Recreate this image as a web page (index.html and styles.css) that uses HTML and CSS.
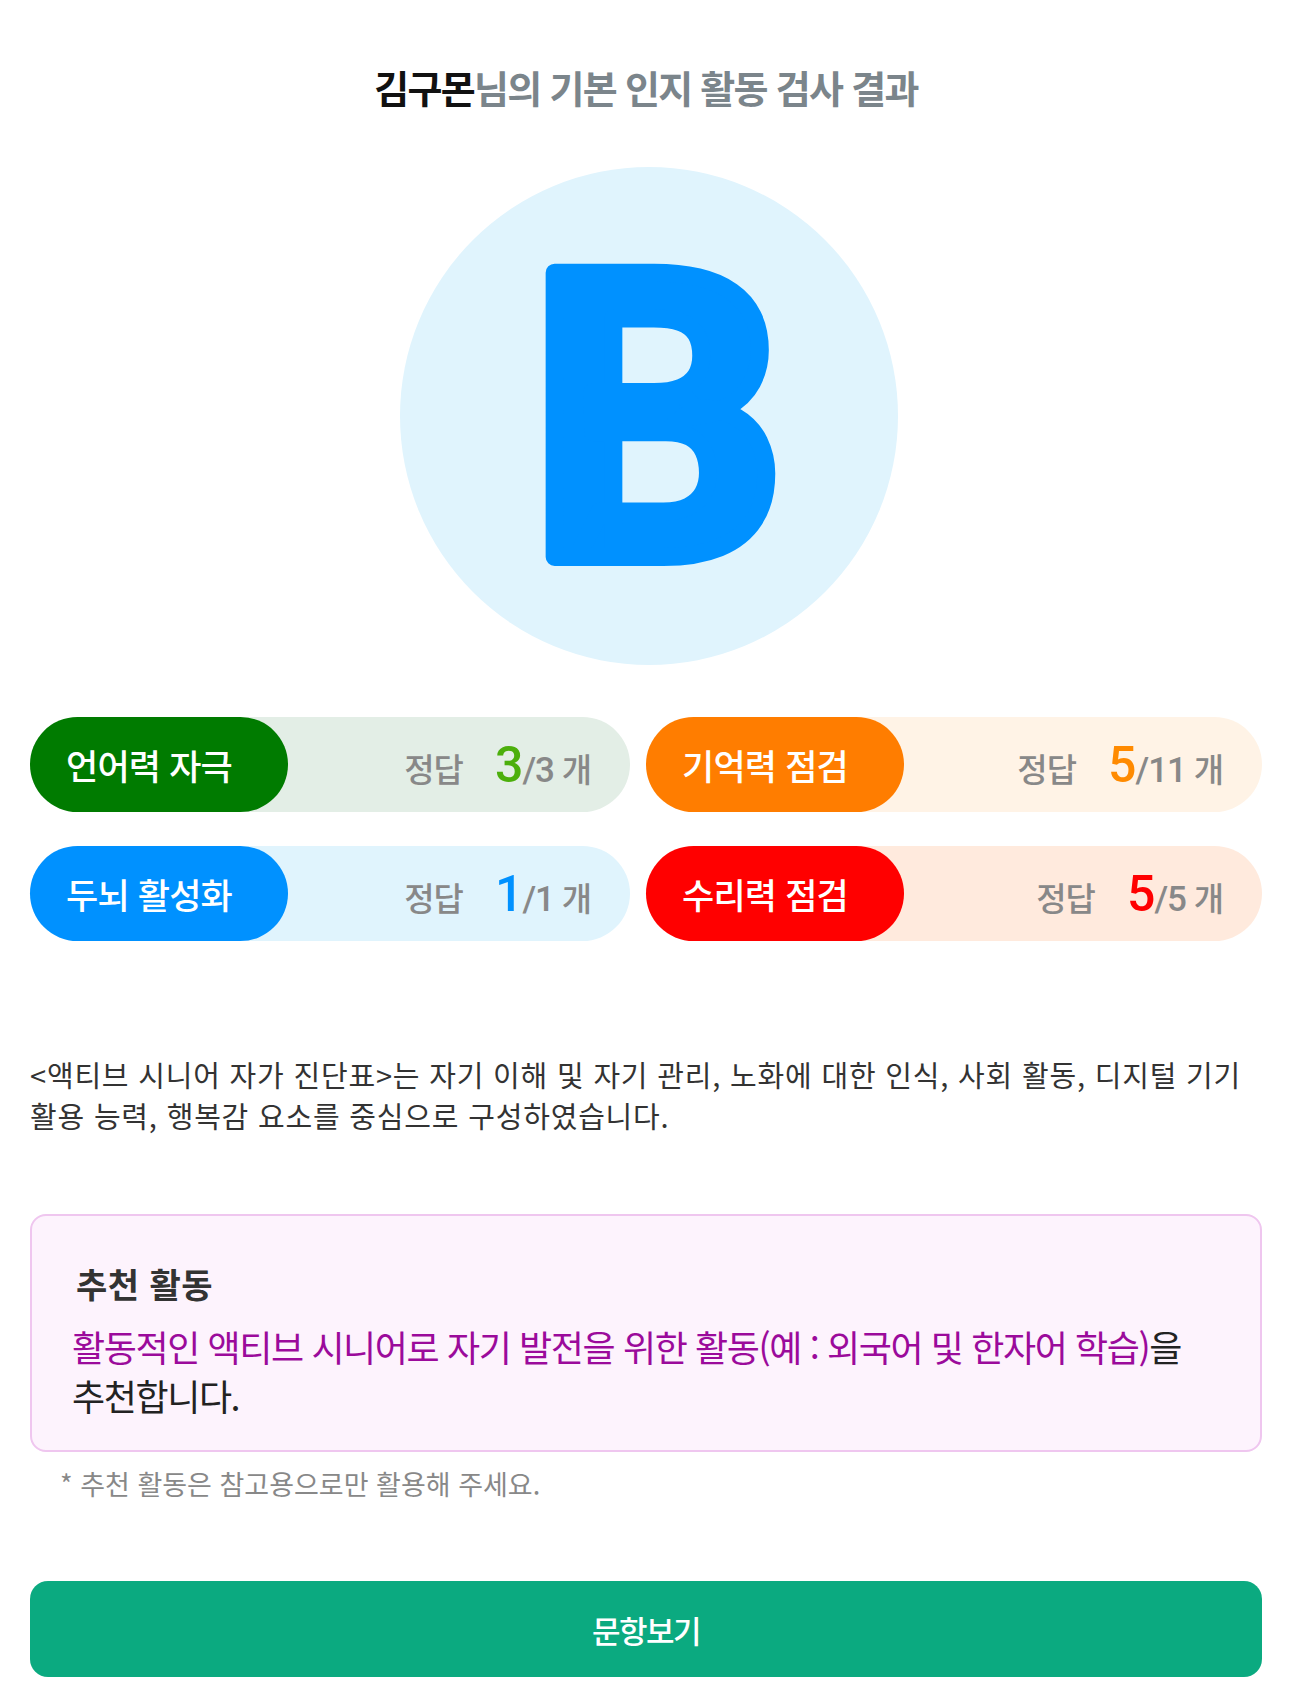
FILE: index.html
```html
<!DOCTYPE html>
<html lang="ko">
<head>
<meta charset="utf-8">
<title>기본 인지 활동 검사 결과</title>
<link rel="stylesheet" href="styles.css">
</head>
<body>
<main class="page">
  <h1 class="title"><span class="name">김구몬</span>님의 기본 인지 활동 검사 결과</h1>

  <div class="grade-wrap">
    <svg class="grade" width="498" height="498" viewBox="0 0 498 498">
      <circle cx="249" cy="249" r="249" class="grade-bg"/>
      <text x="257" y="390" text-anchor="middle" class="grade-letter">B</text>
    </svg>
  </div>

  <section class="cards">
    <div class="card card-green">
      <div class="pill">언어력 자극</div>
      <div class="score"><span class="lbl">정답</span><span class="num">3</span><span class="tot">/3 </span><span class="unit">개</span></div>
    </div>
    <div class="card card-orange">
      <div class="pill">기억력 점검</div>
      <div class="score"><span class="lbl">정답</span><span class="num">5</span><span class="tot">/11 </span><span class="unit">개</span></div>
    </div>
    <div class="card card-blue">
      <div class="pill">두뇌 활성화</div>
      <div class="score"><span class="lbl">정답</span><span class="num">1</span><span class="tot">/1 </span><span class="unit">개</span></div>
    </div>
    <div class="card card-red">
      <div class="pill">수리력 점검</div>
      <div class="score"><span class="lbl">정답</span><span class="num">5</span><span class="tot">/5 </span><span class="unit">개</span></div>
    </div>
  </section>

  <p class="desc">&lt;액티브 시니어 자가 진단표&gt;는 자기 이해 및 자기 관리, 노화에 대한 인식, 사회 활동, 디지털 기기 활용 능력, 행복감 요소를 중심으로 구성하였습니다.</p>

  <section class="recommend">
    <h2 class="rec-title">추천 활동</h2>
    <p class="rec-text"><span class="hl">활동적인 액티브 시니어로 자기 발전을 위한 활동(예 : 외국어 및 한자어 학습)</span>을 추천합니다.</p>
  </section>
  <p class="note">* 추천 활동은 참고용으로만 활용해 주세요.</p>

  <button class="btn" type="button">문항보기</button>
</main>
</body>
</html>
```

FILE: styles.css
```css
html, body {
  margin: 0;
  padding: 0;
  background: #ffffff;
}
body {
  font-family: "Noto Sans CJK KR", "Noto Sans", sans-serif;
  color: #333;
}
.page {
  width: 1232px;
  padding: 64px 43px 14px 30px;
  display: flex;
  flex-direction: column;
}
.title {
  margin: 0;
  text-align: center;
  font-size: 38px;
  line-height: 46px;
  font-weight: 700;
  letter-spacing: -1.7px;
  color: #7b858b;
}
.title .name {
  color: #111;
}
.grade-wrap {
  display: flex;
  justify-content: center;
  margin-top: 57px;
  padding-left: 6px;
}
.grade {
  display: block;
}
.grade-bg {
  fill: #e0f4fd;
}
.grade-letter {
  font-family: "Roboto", "Inter", sans-serif;
  font-weight: 700;
  font-size: 400px;
  fill: #0091ff;
  stroke: #0091ff;
  stroke-width: 18px;
  stroke-linejoin: round;
}
.cards {
  margin-top: 52px;
  display: grid;
  grid-template-columns: 600px 616px;
  column-gap: 16px;
  row-gap: 34px;
}
.card {
  height: 95px;
  border-radius: 48px;
  display: flex;
  align-items: center;
  justify-content: space-between;
}
.pill {
  width: 258px;
  height: 95px;
  border-radius: 48px;
  box-sizing: border-box;
  display: flex;
  align-items: center;
  justify-content: center;
  padding-right: 20px;
  color: #fff;
  font-size: 35px;
  font-weight: 500;
  letter-spacing: -0.8px;
}
.score {
  display: flex;
  align-items: baseline;
  padding-right: 38px;
  color: #888;
}
.score .lbl {
  font-size: 33px;
  font-weight: 500;
  letter-spacing: -1px;
  margin-right: 32px;
}
.score .num {
  font-family: "Roboto", sans-serif;
  font-size: 50px;
  font-weight: 500;
  letter-spacing: -1px;
}
.score .tot {
  font-family: "Roboto", sans-serif;
  font-size: 35px;
  font-weight: 500;
  letter-spacing: -1px;
  white-space: pre;
}
.score .unit {
  font-size: 33px;
  font-weight: 500;
}
.card-green { background: #e3eee6; }
.card-green .pill { background: #007b00; }
.card-green .num { color: #4caf0c; }
.card-orange { background: #fff3e6; }
.card-orange .pill { background: #ff7d00; }
.card-orange .num { color: #ff8a00; }
.card-blue { background: #e0f4fd; }
.card-blue .pill { background: #0091ff; }
.card-blue .num { color: #0091ff; }
.card-red { background: #ffeadd; }
.card-red .pill { background: #ff0000; }
.card-red .num { color: #ff0000; }

.desc {
  margin: 113px 0 0;
  font-size: 29px;
  line-height: 41px;
  letter-spacing: 0.8px;
  color: #333;
  word-break: keep-all;
}
.recommend {
  margin-top: 78px;
  border: 2px solid #efc6ef;
  border-radius: 16px;
  background: #fdf3fd;
  padding: 46px 40px 30px 40px;
}
.rec-title {
  margin: 0 0 0 4px;
  font-size: 34px;
  line-height: 44px;
  font-weight: 700;
  letter-spacing: 0.5px;
  color: #333;
}
.rec-text {
  margin: 16px 0 0;
  font-size: 36px;
  line-height: 49px;
  letter-spacing: -1.4px;
  color: #222;
  word-break: keep-all;
}
.rec-text .hl {
  color: #9b0a9b;
}
.note {
  margin: 14px 0 0 30px;
  font-size: 27px;
  line-height: 35px;
  color: #888;
}
.btn {
  margin-top: 80px;
  height: 96px;
  border: none;
  border-radius: 18px;
  background: #0baa80;
  color: #fff;
  font-family: "Noto Sans CJK KR", sans-serif;
  font-size: 31px;
  font-weight: 500;
  letter-spacing: -1.5px;
}
```
